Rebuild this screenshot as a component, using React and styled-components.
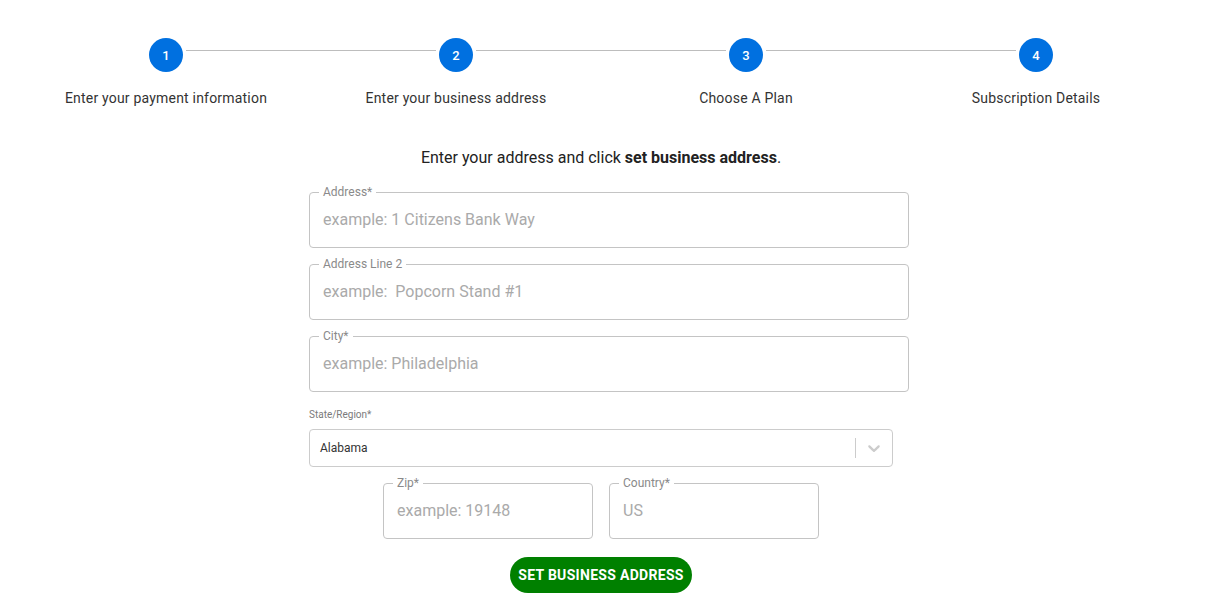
import React from 'react'
import styled, { createGlobalStyle } from 'styled-components'

const GlobalStyle = createGlobalStyle`
  body {
    margin: 0;
    background: #fff;
    font-family: Roboto, "Liberation Sans", sans-serif;
  }
`

const Page = styled.div`
  padding-top: 38px;
`

const Stepper = styled.div`
  display: grid;
  grid-template-columns: repeat(4, 290px);
  margin-left: 21px;
`

const Step = styled.div`
  display: flex;
  flex-direction: column;
  align-items: center;
`

const StepHead = styled.div`
  display: flex;
  align-items: flex-start;
  width: 100%;
`

const Connector = styled.div`
  flex: 1;
  height: 1px;
  margin-top: 12px;
  background: ${(p) => (p.$blank ? 'transparent' : '#bdbdbd')};
`

const Circle = styled.div`
  width: 34px;
  height: 34px;
  margin: 0 3px;
  border-radius: 50%;
  background: #0070e0;
  color: #fff;
  font-size: 13px;
  font-weight: 500;
  display: flex;
  align-items: center;
  justify-content: center;
`

const StepLabel = styled.div`
  margin-top: 16px;
  font-size: 14px;
  line-height: 20px;
  letter-spacing: 0.2px;
  color: #333;
`

const Form = styled.form`
  width: 600px;
  margin: 0 0 0 309px;
  display: flex;
  flex-direction: column;
  gap: 9px;
`

const Intro = styled.p`
  width: 584px;
  margin: 38px 0 6px;
  text-align: center;
  font-size: 16px;
  line-height: 24px;
  color: #222;

  b {
    font-weight: 700;
  }
`

const Field = styled.fieldset`
  margin: 0;
  padding: 0 13px 8px;
  border: 1px solid #c4c4c4;
  border-radius: 4px;
  width: ${(p) => p.$width || 'auto'};
  box-sizing: border-box;
`

const Legend = styled.legend`
  margin-left: -4px;
  padding: 0 4px;
  font-size: 12px;
  line-height: 14px;
  color: #8a8a8a;
`

const Input = styled.input`
  display: block;
  width: 100%;
  height: 40px;
  border: none;
  padding: 0;
  font-family: inherit;
  font-size: 16px;
  color: #333;
  background: transparent;

  &::placeholder {
    color: #aaa;
    opacity: 1;
  }

  &:focus {
    outline: none;
  }
`

const Lower = styled.div`
  width: 584px;
  display: flex;
  flex-direction: column;
  gap: 9px;
`

const SmallLabel = styled.div`
  margin: 8px 0 -1px;
  font-size: 10px;
  line-height: 12px;
  color: #7a7a7a;
`

const Select = styled.div`
  height: 38px;
  box-sizing: border-box;
  border: 1px solid #ccc;
  border-radius: 4px;
  display: flex;
  align-items: center;
`

const SelectValue = styled.div`
  flex: 1;
  padding-left: 10px;
  font-size: 12px;
  color: #333;
`

const Separator = styled.span`
  align-self: stretch;
  width: 1px;
  margin: 8px 0;
  background: #ccc;
`

const Indicator = styled.div`
  padding: 8px;
  display: flex;
  color: #ccc;
`

const Row = styled.div`
  display: flex;
  justify-content: center;
  gap: 16px;
`

const Submit = styled.button`
  align-self: center;
  margin-top: 9px;
  height: 36px;
  padding: 0 8px;
  border: none;
  border-radius: 18px;
  background: #008000;
  color: #fff;
  font-family: inherit;
  font-size: 14px;
  font-weight: 700;
  letter-spacing: 0.3px;
  text-transform: uppercase;
  cursor: pointer;
`

const steps = [
  'Enter your payment information',
  'Enter your business address',
  'Choose A Plan',
  'Subscription Details',
]

const Chevron = () => (
  <svg width="20" height="20" viewBox="0 0 20 20" fill="currentColor">
    <path d="M4.516 7.548c0.436-0.446 1.043-0.481 1.576 0l3.908 3.747 3.908-3.747c0.533-0.481 1.141-0.446 1.574 0 0.436 0.445 0.408 1.197 0 1.615-0.406 0.418-4.695 4.502-4.695 4.502-0.217 0.223-0.502 0.335-0.787 0.335s-0.57-0.112-0.789-0.335c0 0-4.287-4.084-4.695-4.502s-0.436-1.17 0-1.615z" />
  </svg>
)

const OutlinedField = ({ label, placeholder, width }) => (
  <Field $width={width}>
    <Legend>{label}</Legend>
    <Input placeholder={placeholder} />
  </Field>
)

export default function App() {
  return (
    <Page>
      <GlobalStyle />
      <Stepper>
        {steps.map((label, i) => (
          <Step key={label}>
            <StepHead>
              <Connector $blank={i === 0} />
              <Circle>{i + 1}</Circle>
              <Connector $blank={i === steps.length - 1} />
            </StepHead>
            <StepLabel>{label}</StepLabel>
          </Step>
        ))}
      </Stepper>

      <Form onSubmit={(e) => e.preventDefault()}>
        <Intro>
          Enter your address and click <b>set business address</b>.
        </Intro>
        <OutlinedField label="Address*" placeholder="example: 1 Citizens Bank Way" />
        <OutlinedField label="Address Line 2" placeholder="example:  Popcorn Stand #1" />
        <OutlinedField label="City*" placeholder="example: Philadelphia" />
        <Lower>
          <SmallLabel>State/Region*</SmallLabel>
          <Select>
            <SelectValue>Alabama</SelectValue>
            <Separator />
            <Indicator>
              <Chevron />
            </Indicator>
          </Select>
          <Row>
            <OutlinedField label="Zip*" placeholder="example: 19148" width="210px" />
            <OutlinedField label="Country*" placeholder="US" width="210px" />
          </Row>
          <Submit type="submit">Set business address</Submit>
        </Lower>
      </Form>
    </Page>
  )
}
